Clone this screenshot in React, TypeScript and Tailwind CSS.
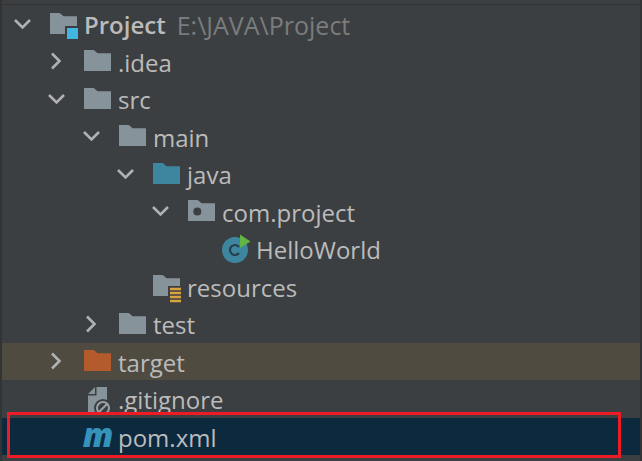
import React from "react";

type Kind = "module" | "folder" | "source" | "package" | "class" | "resources" | "excluded" | "ignored" | "maven";

type Item = {
  name: string;
  kind: Kind;
  level: number;
  open?: boolean;
  path?: string;
};

const items: Item[] = [
  { name: "Project", kind: "module", level: 0, open: true, path: "E:\\JAVA\\Project" },
  { name: ".idea", kind: "folder", level: 1, open: false },
  { name: "src", kind: "folder", level: 1, open: true },
  { name: "main", kind: "folder", level: 2, open: true },
  { name: "java", kind: "source", level: 3, open: true },
  { name: "com.project", kind: "package", level: 4, open: true },
  { name: "HelloWorld", kind: "class", level: 5 },
  { name: "resources", kind: "resources", level: 3 },
  { name: "test", kind: "folder", level: 2, open: false },
  { name: "target", kind: "excluded", level: 1, open: false },
  { name: ".gitignore", kind: "ignored", level: 1 },
  { name: "pom.xml", kind: "maven", level: 1 },
];

const indents = ["pl-[4px]", "pl-[38px]", "pl-[73px]", "pl-[107px]", "pl-[142px]", "pl-[176px]"];

const folderPath = "M3 6H12Q13 6 14 7L16.5 9.3H30V27H3Z";

function Chevron({ open }: { open: boolean }) {
  return (
    <svg viewBox="0 0 34 34" className="size-[34px]" fill="none" stroke="#afb1b3" strokeWidth="2.6" aria-hidden="true">
      <path d={open ? "M9 13L16.5 20.5L24 13" : "M12 9.5L19.5 17L12 24.5"} />
    </svg>
  );
}

function Icon({ kind }: { kind: Kind }) {
  if (kind === "maven") {
    return (
      <span
        aria-hidden="true"
        className="w-[34px] shrink-0 pb-[3px] text-center text-[33px] font-extrabold text-[#3592b8] italic"
      >
        m
      </span>
    );
  }
  const fill = kind === "source" ? "#3e86a0" : kind === "excluded" ? "#b35b2d" : "#87939a";
  return (
    <svg viewBox="0 0 34 34" className="size-[34px] shrink-0" aria-hidden="true">
      {kind !== "class" && kind !== "ignored" && <path d={folderPath} fill={fill} />}
      {kind === "module" && (
        <>
          <path d="M18 19H34V34H18Z" fill="#3c3f41" />
          <path d="M20 21H31V32H20Z" fill="#40b6e0" />
        </>
      )}
      {kind === "package" && <circle cx="12.3" cy="17.5" r="4" fill="#3c3f41" />}
      {kind === "resources" && (
        <>
          <path d="M18 17H34V34H18Z" fill="#3c3f41" />
          <path d="M20 20H31M20 24H31M20 28H31M20 32H31" stroke="#d9a343" strokeWidth="2.4" />
        </>
      )}
      {kind === "class" && (
        <>
          <circle cx="16" cy="18" r="13" fill="#3e86a0" />
          <path d="M20 15A5 5 0 1 0 20 21" fill="none" stroke="#263f4a" strokeWidth="2.2" />
          <path d="M21 2.5L31.5 9.5L21 16Z" fill="#62b543" />
        </>
      )}
      {kind === "ignored" && (
        <>
          <path d="M7 12L14 5V12Z M15.5 5H26V31H7V13.5H15.5Z" fill="#87939a" />
          <circle cx="22" cy="26" r="9" fill="#3c3f41" />
          <circle cx="22" cy="26" r="6" fill="none" stroke="#9aa4aa" strokeWidth="2" />
          <path d="M18 30L26 22" stroke="#9aa4aa" strokeWidth="2" />
        </>
      )}
    </svg>
  );
}

function Row({ item }: { item: Item }) {
  const back = item.kind === "excluded" ? "bg-[#4f4b41]" : item.kind === "maven" ? "bg-[#0d293e]" : "";
  return (
    <li
      role="treeitem"
      aria-level={item.level + 1}
      aria-expanded={item.open}
      aria-selected={item.kind === "maven"}
      className={`relative flex min-h-0 items-center ${indents[item.level]} ${back}`}
    >
      {item.open === undefined ? (
        <span className="w-[34px] shrink-0" />
      ) : (
        <button type="button" aria-label={`Toggle ${item.name}`} className="w-[34px] shrink-0">
          <Chevron open={item.open} />
        </button>
      )}
      <span className="ml-[7px] flex items-center gap-[3px] whitespace-nowrap">
        <Icon kind={item.kind} />
        <span className={`pt-[3px] ${item.level === 0 ? "font-semibold" : ""}`}>{item.name}</span>
        {item.path && <span className="ml-2 pt-[3px] text-[25px] text-[#7a7c7d]">{item.path}</span>}
      </span>
      {item.kind === "maven" && (
        <span className="pointer-events-none absolute -top-[6px] right-[19px] -bottom-[3px] left-[5px] border-[3px] border-[#ed1c24]" />
      )}
    </li>
  );
}

export default function App() {
  return (
    <main className="min-h-screen overflow-hidden border-x-2 border-[#313335] bg-[#3c3f41] font-['Open_Sans','Noto_Sans',sans-serif] text-[24px] leading-[36px] text-[#bbbbbb]">
      <div className="h-[5px] border-b border-[#323232]" />
      <ul role="tree" aria-label="Project files" className="grid h-[450px] grid-rows-12">
        {items.map((item) => (
          <Row key={item.name} item={item} />
        ))}
      </ul>
    </main>
  );
}
